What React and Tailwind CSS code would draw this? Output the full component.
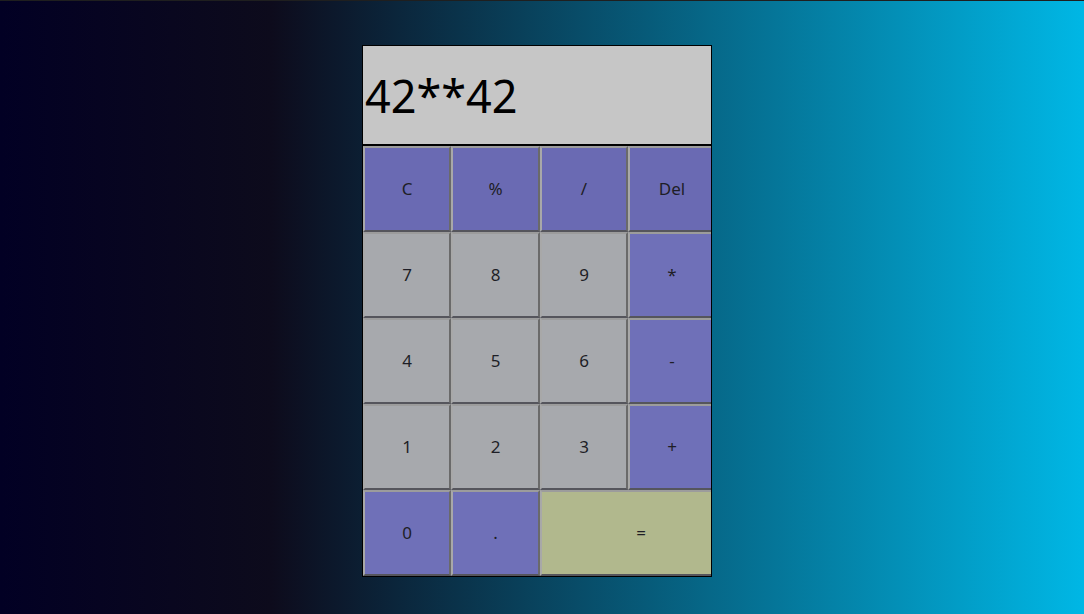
import React from "react";

const keys = [
  { l: "C", t: "op" },
  { l: "%", t: "op" },
  { l: "/", t: "op" },
  { l: "Del", t: "op" },
  { l: "7", t: "num" },
  { l: "8", t: "num" },
  { l: "9", t: "num" },
  { l: "*", t: "op2" },
  { l: "4", t: "num" },
  { l: "5", t: "num" },
  { l: "6", t: "num" },
  { l: "-", t: "op2" },
  { l: "1", t: "num" },
  { l: "2", t: "num" },
  { l: "3", t: "num" },
  { l: "+", t: "op2" },
  { l: "0", t: "op2" },
  { l: ".", t: "op2" },
  { l: "=", t: "eq" },
];

const bg = {
  op: "bg-[#6a6ab3]",
  op2: "bg-[#6f70b8]",
  num: "bg-[#a7a9ad]",
  eq: "bg-[#b1b88d] col-span-2 pl-[26px]",
};

export default function App() {
  return (
    <div
      className="w-[1084px] h-[614px] border-t border-[#1f1f1f] flex justify-center pt-[44px] pr-[10px] bg-[linear-gradient(90deg,#020024_0%,#0d0b1c_25%,#00b7e5_100%)]"
      style={{ fontFamily: '"Noto Sans", "Open Sans", sans-serif' }}
    >
      <div className="w-[350px] h-[532px] border border-black bg-[#c6c6c6] flex flex-col overflow-hidden">
        <div className="h-[100px] shrink-0 flex items-center pl-[2px] border-b-[2px] border-black text-[45px] text-black leading-none">
          42**42
        </div>
        <div className="grid grid-cols-[88px_89px_88px_88px] grid-rows-[86px_86px_86px_86px_86px]">
          {keys.map((k) => (
            <div
              key={k.l}
              className={`${bg[k.t]} border-2 border-t-[#9c9c9c] border-l-[#a8a8a8] border-b-[#55555c] border-r-[#6a6a6a] flex items-center justify-center text-[17px] text-[#1e1e26]`}
            >
              {k.l}
            </div>
          ))}
        </div>
      </div>
    </div>
  );
}
